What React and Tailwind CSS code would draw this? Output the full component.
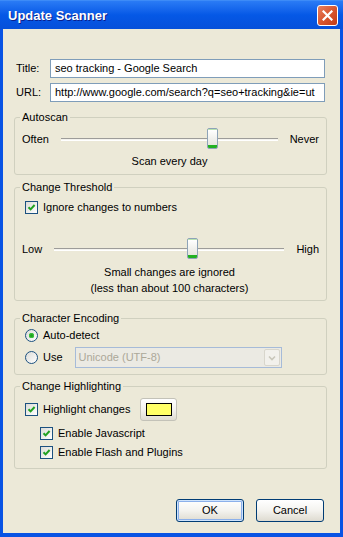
import React from "react";

// small XP-style controls
const CheckBox = ({ checked = true }) => (
  <span className="flex h-[13px] w-[13px] shrink-0 items-center justify-center border border-[#1C5180] bg-linear-to-br from-[#DCDCD7] to-white">
    {checked && (
      <svg width="9" height="9" viewBox="0 0 9 9">
        <path d="M1.5 4.2 L3.6 6.4 L7.6 2" stroke="#21A121" strokeWidth="2" fill="none" />
      </svg>
    )}
  </span>
);

const Radio = ({ checked }) => (
  <span className="flex h-[13px] w-[13px] shrink-0 items-center justify-center rounded-full border border-[#1C5180] bg-linear-to-br from-[#DCDCD7] to-white">
    {checked && <span className="h-[5px] w-[5px] rounded-full bg-[#21A121] shadow-[inset_0_0_0_1px_#3BC43B]" />}
  </span>
);

const Slider = ({ left, right, thumb }) => (
  <div className="flex h-[22px] items-center gap-[12px] pl-[2px]">
    <span>{left}</span>
    <div className="relative flex-1">
      <div className="h-[3px] border-t border-[#9D9C99] bg-[#F4F3EE] border-b border-b-white" />
      <div
        className="absolute top-[-10px] flex h-[21px] w-[11px] flex-col overflow-hidden rounded-[2px] border border-[#8EA3B8]"
        style={{ left: thumb }}
      >
        <div className="h-[1px] bg-[#B8E3B0]" />
        <div className="flex-1 bg-linear-to-b from-white to-[#E6E6DF]" />
        <div className="h-[3px] bg-[#21B121]" />
      </div>
    </div>
    <span>{right}</span>
  </div>
);

const Group = ({ title, className, children }) => (
  <fieldset className={`rounded-[3px] border border-[#D0D0BF] pl-[5px] pr-[7px] ${className}`}>
    <legend className="px-[2px] leading-[13px]">{title}</legend>
    {children}
  </fieldset>
);

const XpButton = ({ children, focused, className = "" }) => (
  <div
    className={`flex h-[23px] items-center justify-center rounded-[3px] border border-[#003C74] bg-linear-to-b from-white via-[#F4F3EF] to-[#DEDBD0] ${
      focused ? "shadow-[inset_0_0_0_1px_#CEE3FC,inset_0_0_0_2px_#8CB0EA]" : ""
    } ${className}`}
  >
    {children}
  </div>
);

export default function App() {
  return (
    <div className="flex h-[537px] w-[343px] flex-col bg-[#0853E4] font-['Liberation_Sans',Arial,sans-serif] text-[11px] leading-[13px] text-black">
      {/* Title bar */}
      <div className="flex h-[29px] shrink-0 items-center justify-between border-t border-[#3D8BF7] bg-linear-to-b from-[#2A7BF5] via-[#0558E6] to-[#0650DA] pl-[8px] pr-[5px]">
        <span className="text-[13px] font-bold text-white [text-shadow:1px_1px_0_#0A1E8C]">Update Scanner</span>
        <div className="flex h-[21px] w-[21px] items-center justify-center rounded-[3px] border border-white bg-linear-to-br from-[#E8805E] via-[#D8562F] to-[#C23A12]">
          <svg width="11" height="11" viewBox="0 0 11 11">
            <path d="M1.5 1.5 L9.5 9.5 M9.5 1.5 L1.5 9.5" stroke="white" strokeWidth="2.2" strokeLinecap="square" />
          </svg>
        </div>
      </div>

      {/* Body */}
      <div className="mx-[3px] mb-[4px] flex flex-1 flex-col bg-[#ECE9D8] pl-[11px] pr-[13px]">
        <div className="mx-[2px] mt-[30px] flex items-center">
          <span className="w-[34px]">Title:</span>
          <div className="flex h-[19px] flex-1 items-center overflow-hidden whitespace-nowrap border border-[#7F9DB9] bg-white pl-[4px]">
            seo tracking - Google Search
          </div>
        </div>
        <div className="mx-[2px] mt-[5px] flex items-center">
          <span className="w-[34px]">URL:</span>
          <div className="flex h-[19px] flex-1 items-center overflow-hidden whitespace-nowrap border border-[#7F9DB9] bg-white pl-[4px]">
            http://www.google.com/search?q=seo+tracking&amp;ie=ut
          </div>
        </div>

        <Group title="Autoscan" className="mt-[9px] h-[64px]">
          <div className="mt-[4px]">
            <Slider left="Often" right="Never" thumb={146} />
          </div>
          <div className="mt-[5px] text-center">Scan every day</div>
        </Group>

        <Group title="Change Threshold" className="mt-[6px] h-[120px]">
          <label className="mt-[7px] ml-[5px] flex items-center gap-[5px]">
            <CheckBox />
            <span>Ignore changes to numbers</span>
          </label>
          <div className="mt-[24px]">
            <Slider left="Low" right="High" thumb={133} />
          </div>
          <div className="mt-[4px] text-center leading-[16px]">
            <div>Small changes are ignored</div>
            <div>(less than about 100 characters)</div>
          </div>
        </Group>

        <Group title="Character Encoding" className="mt-[11px] h-[63px]">
          <div className="mt-[4px] ml-[5px] flex items-center gap-[5px]">
            <Radio checked />
            <span>Auto-detect</span>
          </div>
          <div className="mt-[5px] ml-[5px] flex items-center gap-[5px]">
            <Radio />
            <span>Use</span>
            <div className="ml-[7px] flex h-[21px] w-[207px] items-center border border-[#A6BBD8] bg-[#EBEAE3] pl-[3px] text-[#ACA899]">
              <span className="flex-1">Unicode (UTF-8)</span>
              <div className="mr-[1px] flex h-[17px] w-[16px] items-center justify-center rounded-[2px] border border-[#D8D6CC] bg-[#F2F1EC]">
                <svg width="8" height="6" viewBox="0 0 8 6">
                  <path d="M1 1.5 L4 4.5 L7 1.5" stroke="#C9C7BA" strokeWidth="1.6" fill="none" />
                </svg>
              </div>
            </div>
          </div>
        </Group>

        <Group title="Change Highlighting" className="mt-[5px] h-[89px]">
          <div className="mt-[5px] ml-[5px] flex items-center gap-[5px]">
            <CheckBox />
            <span>Highlight changes</span>
            <XpButton className="ml-[5px] w-[37px] border-[#C3C2B8]">
              <div className="h-[13px] w-[26px] border border-black bg-[#FFFF66]" />
            </XpButton>
          </div>
          <div className="mt-[6px] ml-[20px] flex items-center gap-[5px]">
            <CheckBox />
            <span>Enable Javascript</span>
          </div>
          <div className="mt-[6px] ml-[20px] flex items-center gap-[5px]">
            <CheckBox />
            <span>Enable Flash and Plugins</span>
          </div>
        </Group>

        <div className="mt-auto mb-[11px] mr-[3px] flex justify-end gap-[12px]">
          <XpButton focused className="w-[68px]">OK</XpButton>
          <XpButton className="w-[68px]">Cancel</XpButton>
        </div>
      </div>
    </div>
  );
}
